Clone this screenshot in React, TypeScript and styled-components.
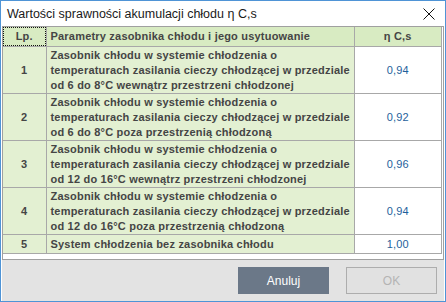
import styled, { createGlobalStyle } from 'styled-components';

type Row = {
  lp: number;
  text: string[];
  value: string;
};

const rows: Row[] = [
  {
    lp: 1,
    text: [
      'Zasobnik chłodu w systemie chłodzenia o',
      'temperaturach zasilania cieczy chłodzącej w przedziale',
      'od 6 do 8°C wewnątrz przestrzeni chłodzonej',
    ],
    value: '0,94',
  },
  {
    lp: 2,
    text: [
      'Zasobnik chłodu w systemie chłodzenia o',
      'temperaturach zasilania cieczy chłodzącej w przedziale',
      'od 6 do 8°C poza przestrzenią chłodzoną',
    ],
    value: '0,92',
  },
  {
    lp: 3,
    text: [
      'Zasobnik chłodu w systemie chłodzenia o',
      'temperaturach zasilania cieczy chłodzącej w przedziale',
      'od 12 do 16°C wewnątrz przestrzeni chłodzonej',
    ],
    value: '0,96',
  },
  {
    lp: 4,
    text: [
      'Zasobnik chłodu w systemie chłodzenia o',
      'temperaturach zasilania cieczy chłodzącej w przedziale',
      'od 12 do 16°C poza przestrzenią chłodzoną',
    ],
    value: '0,94',
  },
  {
    lp: 5,
    text: ['System chłodzenia bez zasobnika chłodu'],
    value: '1,00',
  },
];

const App = () => {
  return (
    <>
      <GlobalStyle />
      <Window>
        <TitleBar>
          <Title>Wartości sprawności akumulacji chłodu η C,s</Title>
          <CloseButton>
            <svg width="12" height="12" viewBox="0 0 12 12">
              <path d="M0.5 0.5 L11.5 11.5 M11.5 0.5 L0.5 11.5" stroke="#111" strokeWidth="1" />
            </svg>
          </CloseButton>
        </TitleBar>

        <GridPanel>
          <Table>
            <colgroup>
              <col style={{ width: 43 }} />
              <col style={{ width: 308 }} />
              <col />
            </colgroup>
            <thead>
              <tr>
                <HeadCell $focused>Lp.</HeadCell>
                <HeadCell $align="left">Parametry zasobnika chłodu i jego usytuowanie</HeadCell>
                <HeadCell>η C,s</HeadCell>
              </tr>
            </thead>
            <tbody>
              {rows.map((row) => (
                <tr key={row.lp}>
                  <LpCell>{row.lp}</LpCell>
                  <TextCell $single={row.text.length === 1}>
                    {row.text.map((line) => (
                      <Line key={line}>{line}</Line>
                    ))}
                  </TextCell>
                  <ValueCell>{row.value}</ValueCell>
                </tr>
              ))}
            </tbody>
          </Table>
        </GridPanel>

        <Footer>
          <Button $variant="primary">Anuluj</Button>
          <Button $variant="disabled">OK</Button>
        </Footer>
      </Window>
    </>
  );
};

const GlobalStyle = createGlobalStyle`
  html, body {
    margin: 0;
    padding: 0;
    background: #ffffff;
  }
  * {
    box-sizing: border-box;
  }
`;

const Window = styled.div`
  width: 446px;
  height: 302px;
  border: 1px solid #4f94d6;
  background: #ffffff;
  display: flex;
  flex-direction: column;
  font-family: 'Liberation Sans', Arial, sans-serif;
`;

const TitleBar = styled.div`
  height: 25px;
  display: flex;
  align-items: center;
  justify-content: space-between;
  padding: 0 10px 0 6px;
  flex-shrink: 0;
`;

const Title = styled.span`
  font-size: 12.5px;
  color: #1a1a1a;
`;

const CloseButton = styled.span`
  display: flex;
  align-items: center;
  margin-top: 1px;
`;

const GridPanel = styled.div`
  height: 234px;
  margin: 0 1px;
  border: 1px solid #a0a0a0;
  background: #ffffff;
  flex-shrink: 0;
`;

const Table = styled.table`
  width: 439px;
  border-collapse: collapse;
  table-layout: fixed;
  font-size: 11px;
  font-weight: bold;
  letter-spacing: 0.2px;
  color: #454545;
`;

const HeadCell = styled.th<{ $align?: 'left' | 'center'; $focused?: boolean }>`
  height: 19px;
  padding: 0 4px;
  background: #d8ebc2;
  border: 1px solid #a8a8a8;
  border-top: none;
  text-align: ${(p) => p.$align ?? 'center'};
  font-weight: bold;
  outline: ${(p) => (p.$focused ? '1px dotted #111' : 'none')};
  outline-offset: -1px;
  &:first-child {
    border-left: none;
  }
`;

const LpCell = styled.td`
  background: #e3f0d2;
  border: 1px solid #a8a8a8;
  border-left: none;
  text-align: center;
  vertical-align: middle;
`;

const TextCell = styled.td<{ $single?: boolean }>`
  background: #e3f0d2;
  border: 1px solid #a8a8a8;
  padding: ${(p) => (p.$single ? '2px 4px 1px' : '1px 4px 0')};
  line-height: 15px;
  white-space: nowrap;
  overflow: hidden;
`;

const Line = styled.div``;

const ValueCell = styled.td`
  background: #ffffff;
  border: 1px solid #a8a8a8;
  text-align: center;
  font-weight: normal;
  color: #1e5f9c;
`;

const Footer = styled.div`
  flex: 1;
  margin: 0 1px;
  background: #e3e3e3;
  display: flex;
  justify-content: flex-end;
  align-items: center;
  gap: 17px;
  padding: 0 7px 0 0;
`;

const Button = styled.button<{ $variant: 'primary' | 'disabled' }>`
  width: 91px;
  height: 27px;
  font-family: 'Liberation Sans', Arial, sans-serif;
  font-size: 12px;
  border: 1px solid ${(p) => (p.$variant === 'primary' ? '#6b7888' : '#adadad')};
  background: ${(p) => (p.$variant === 'primary' ? '#6b7888' : '#e1e1e1')};
  color: ${(p) => (p.$variant === 'primary' ? '#ffffff' : '#b4b4b4')};
  padding: 0;
`;

export default App;
